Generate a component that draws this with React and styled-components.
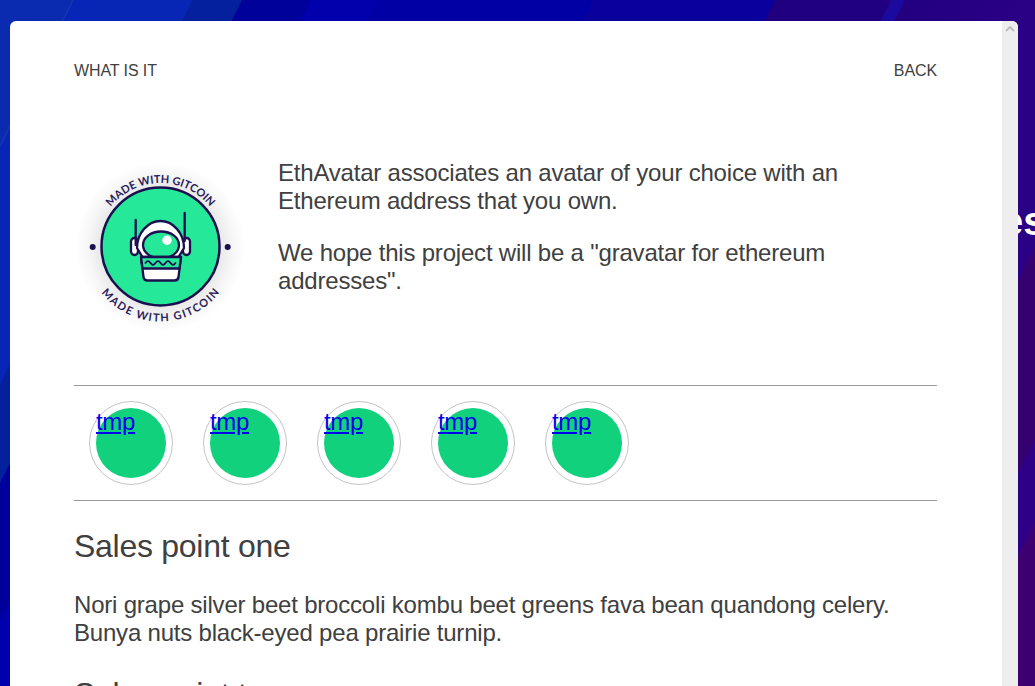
import React from 'react'
import styled, { createGlobalStyle } from 'styled-components'

const GlobalStyle = createGlobalStyle`
  html, body {
    margin: 0;
    height: 100%;
    overflow: hidden;
  }
  body {
    font-family: "Liberation Sans", Arial, sans-serif;
  }
`

const Page = styled.div`
  position: relative;
  width: 1035px;
  height: 686px;
  overflow: hidden;
  background: linear-gradient(
    116.6deg,
    #0a2ab0 0%,
    #0a2ab0 5.2%,
    #1a36b6 5.3%,
    #0826b5 5.4%,
    #0826b5 13.9%,
    #04209c 14%,
    #04209c 17.5%,
    #00009b 17.6%,
    #00009b 22.5%,
    #0000ad 22.6%,
    #0000ad 27.3%,
    #0000a4 27.4%,
    #0000a4 43%,
    #0a009c 43.1%,
    #0a009c 56.2%,
    #20007f 56.3%,
    #20007f 64.6%,
    #1c0a9e 64.7%,
    #1c0a9e 65.6%,
    #22007f 65.7%,
    #2a0084 74%,
    #2a0084 84%,
    #35006f 84.1%,
    #35006f 91%,
    #2e0088 91.1%,
    #2e0088 94%,
    #3c0070 94.1%,
    #3c0070 100%
  );
`

const BackTitle = styled.h1`
  position: absolute;
  left: 1001px;
  top: 197px;
  margin: 0;
  color: #fff;
  font-size: 40px;
  font-weight: 700;
  line-height: 48px;
  white-space: nowrap;
`

const Modal = styled.div`
  position: absolute;
  left: 10px;
  top: 21px;
  width: 1008px;
  height: 700px;
  display: flex;
  background: #fff;
  border-top-left-radius: 6px;
  border-top-right-radius: 6px;
  overflow: hidden;
`

const Content = styled.div`
  flex: 1;
  padding: 41px 65px 0 64px;
  color: #404040;
`

const Track = styled.div`
  width: 16px;
  display: flex;
  justify-content: center;
  padding-top: 5px;
  background: #eeeeee;
  box-sizing: border-box;
`

const Nav = styled.div`
  display: flex;
  justify-content: space-between;
  font-size: 16px;
  line-height: 18px;
  letter-spacing: -0.1px;
`

const Intro = styled.div`
  display: flex;
  align-items: flex-start;
  margin-top: 79px;
  height: 226px;
`

const LogoBox = styled.div`
  width: 204px;
  flex-shrink: 0;
  margin-top: 1px;
`

const IntroText = styled.div`
  width: 600px;
`

const Para = styled.p`
  margin: 0 0 24px;
  font-size: 24px;
  line-height: 28px;
  letter-spacing: -0.2px;
`

const SalesPara = styled(Para)`
  margin-bottom: 29px;
`

const AvatarRow = styled.div`
  display: flex;
  gap: 30px;
  padding: 15px 15px;
  border-top: 1px solid #999;
  border-bottom: 1px solid #999;
`

const Avatar = styled.div`
  width: 84px;
  height: 84px;
  box-sizing: border-box;
  padding: 6px;
  border: 1px solid #c4c4c4;
  border-radius: 50%;
`

const AvatarFill = styled.div`
  width: 70px;
  height: 70px;
  border-radius: 50%;
  background: #11d17d;
`

const TmpLink = styled.a`
  display: block;
  font-size: 24px;
  line-height: 28px;
  letter-spacing: -0.3px;
  color: #0000ee;
  text-decoration: underline;
`

const SubHead = styled.h2`
  margin: 27px 0 27px;
  font-size: 32px;
  line-height: 36px;
  font-weight: 400;
  letter-spacing: -0.27px;
`

function GitcoinBadge() {
  return (
    <svg width="173" height="173" viewBox="74 160 173 173" style={{ display: 'block' }}>
      <defs>
        <radialGradient id="halo">
          <stop offset="0.7" stopColor="#000" stopOpacity="0.09" />
          <stop offset="0.85" stopColor="#000" stopOpacity="0.035" />
          <stop offset="1" stopColor="#000" stopOpacity="0" />
        </radialGradient>
        <path id="topArc" d="M 97 246.5 A 63.5 63.5 0 0 1 224 246.5" />
        <path id="botArc" d="M 85.5 246.5 A 75 75 0 0 0 235.5 246.5" />
      </defs>
      <circle cx="160.5" cy="246.5" r="85" fill="url(#halo)" />
      <circle cx="160.5" cy="246.5" r="59" fill="#25e899" stroke="#1c0f4f" strokeWidth="2.5" />
      <circle cx="92.7" cy="247" r="3" fill="#1c0f4f" />
      <circle cx="227.7" cy="247" r="3" fill="#1c0f4f" />
      <text fontFamily="Lato, sans-serif" fontSize="11" fontWeight="700" fill="#2a1d5c">
        <textPath href="#topArc" startOffset="50%" textAnchor="middle" textLength="114">MADE WITH GITCOIN</textPath>
      </text>
      <text fontFamily="Lato, sans-serif" fontSize="11" fontWeight="700" fill="#2a1d5c">
        <textPath href="#botArc" startOffset="50%" textAnchor="middle" textLength="136">MADE WITH GITCOIN</textPath>
      </text>
      <g stroke="#1c0f4f" strokeWidth="2.3" fill="#fff" strokeLinejoin="round" strokeLinecap="round">
        <rect x="131" y="238" width="7" height="17" rx="3.5" />
        <rect x="183" y="238" width="7" height="17" rx="3.5" />
        <path d="M137 248 C137 233 148 221 160.5 221 C173 221 184 233 184 248 L178 258 H143 Z" />
        <ellipse cx="161" cy="245" rx="18" ry="13.5" fill="#25e899" />
        <path d="M141 257 H181 L178.5 277 A4 4 0 0 1 174.5 280.5 H147 A4 4 0 0 1 143.5 277 Z" />
        <path d="M141 257 H181 L179.5 268.5 H142.5 Z" fill="#25e899" />
        <path d="M135.7 220 V245 M184.7 213 V241" fill="none" />
      </g>
      <path
        d="M145.5 263 q2.5 -3.6 5 0 t5 0 t5 0 t5 0 t5 0 t5 0"
        fill="none"
        stroke="#1c0f4f"
        strokeWidth="1.8"
        strokeLinecap="round"
      />
      <circle cx="167" cy="240.3" r="4.7" fill="#fff" />
    </svg>
  )
}

const names = [1, 2, 3, 4, 5]

function App() {
  return (
    <>
      <GlobalStyle />
      <Page>
        <BackTitle>es</BackTitle>
        <Modal>
          <Content>
            <Nav>
              <span>WHAT IS IT</span>
              <span>BACK</span>
            </Nav>
            <Intro>
              <LogoBox>
                <GitcoinBadge />
              </LogoBox>
              <IntroText>
                <Para>EthAvatar associates an avatar of your choice with an Ethereum address that you own.</Para>
                <Para>We hope this project will be a "gravatar for ethereum addresses".</Para>
              </IntroText>
            </Intro>
            <AvatarRow>
              {names.map(n => (
                <Avatar key={n}>
                  <AvatarFill>
                    <TmpLink href="#">tmp</TmpLink>
                  </AvatarFill>
                </Avatar>
              ))}
            </AvatarRow>
            <SubHead>Sales point one</SubHead>
            <SalesPara>Nori grape silver beet broccoli kombu beet greens fava bean quandong celery. Bunya nuts black-eyed pea prairie turnip.</SalesPara>
            <SubHead>Sales point two</SubHead>
          </Content>
          <Track>
            <svg width="10" height="6" viewBox="0 0 10 6">
              <path d="M1 5 L5 1 L9 5" fill="none" stroke="#bdbdbd" strokeWidth="2" />
            </svg>
          </Track>
        </Modal>
      </Page>
    </>
  )
}

export default App
